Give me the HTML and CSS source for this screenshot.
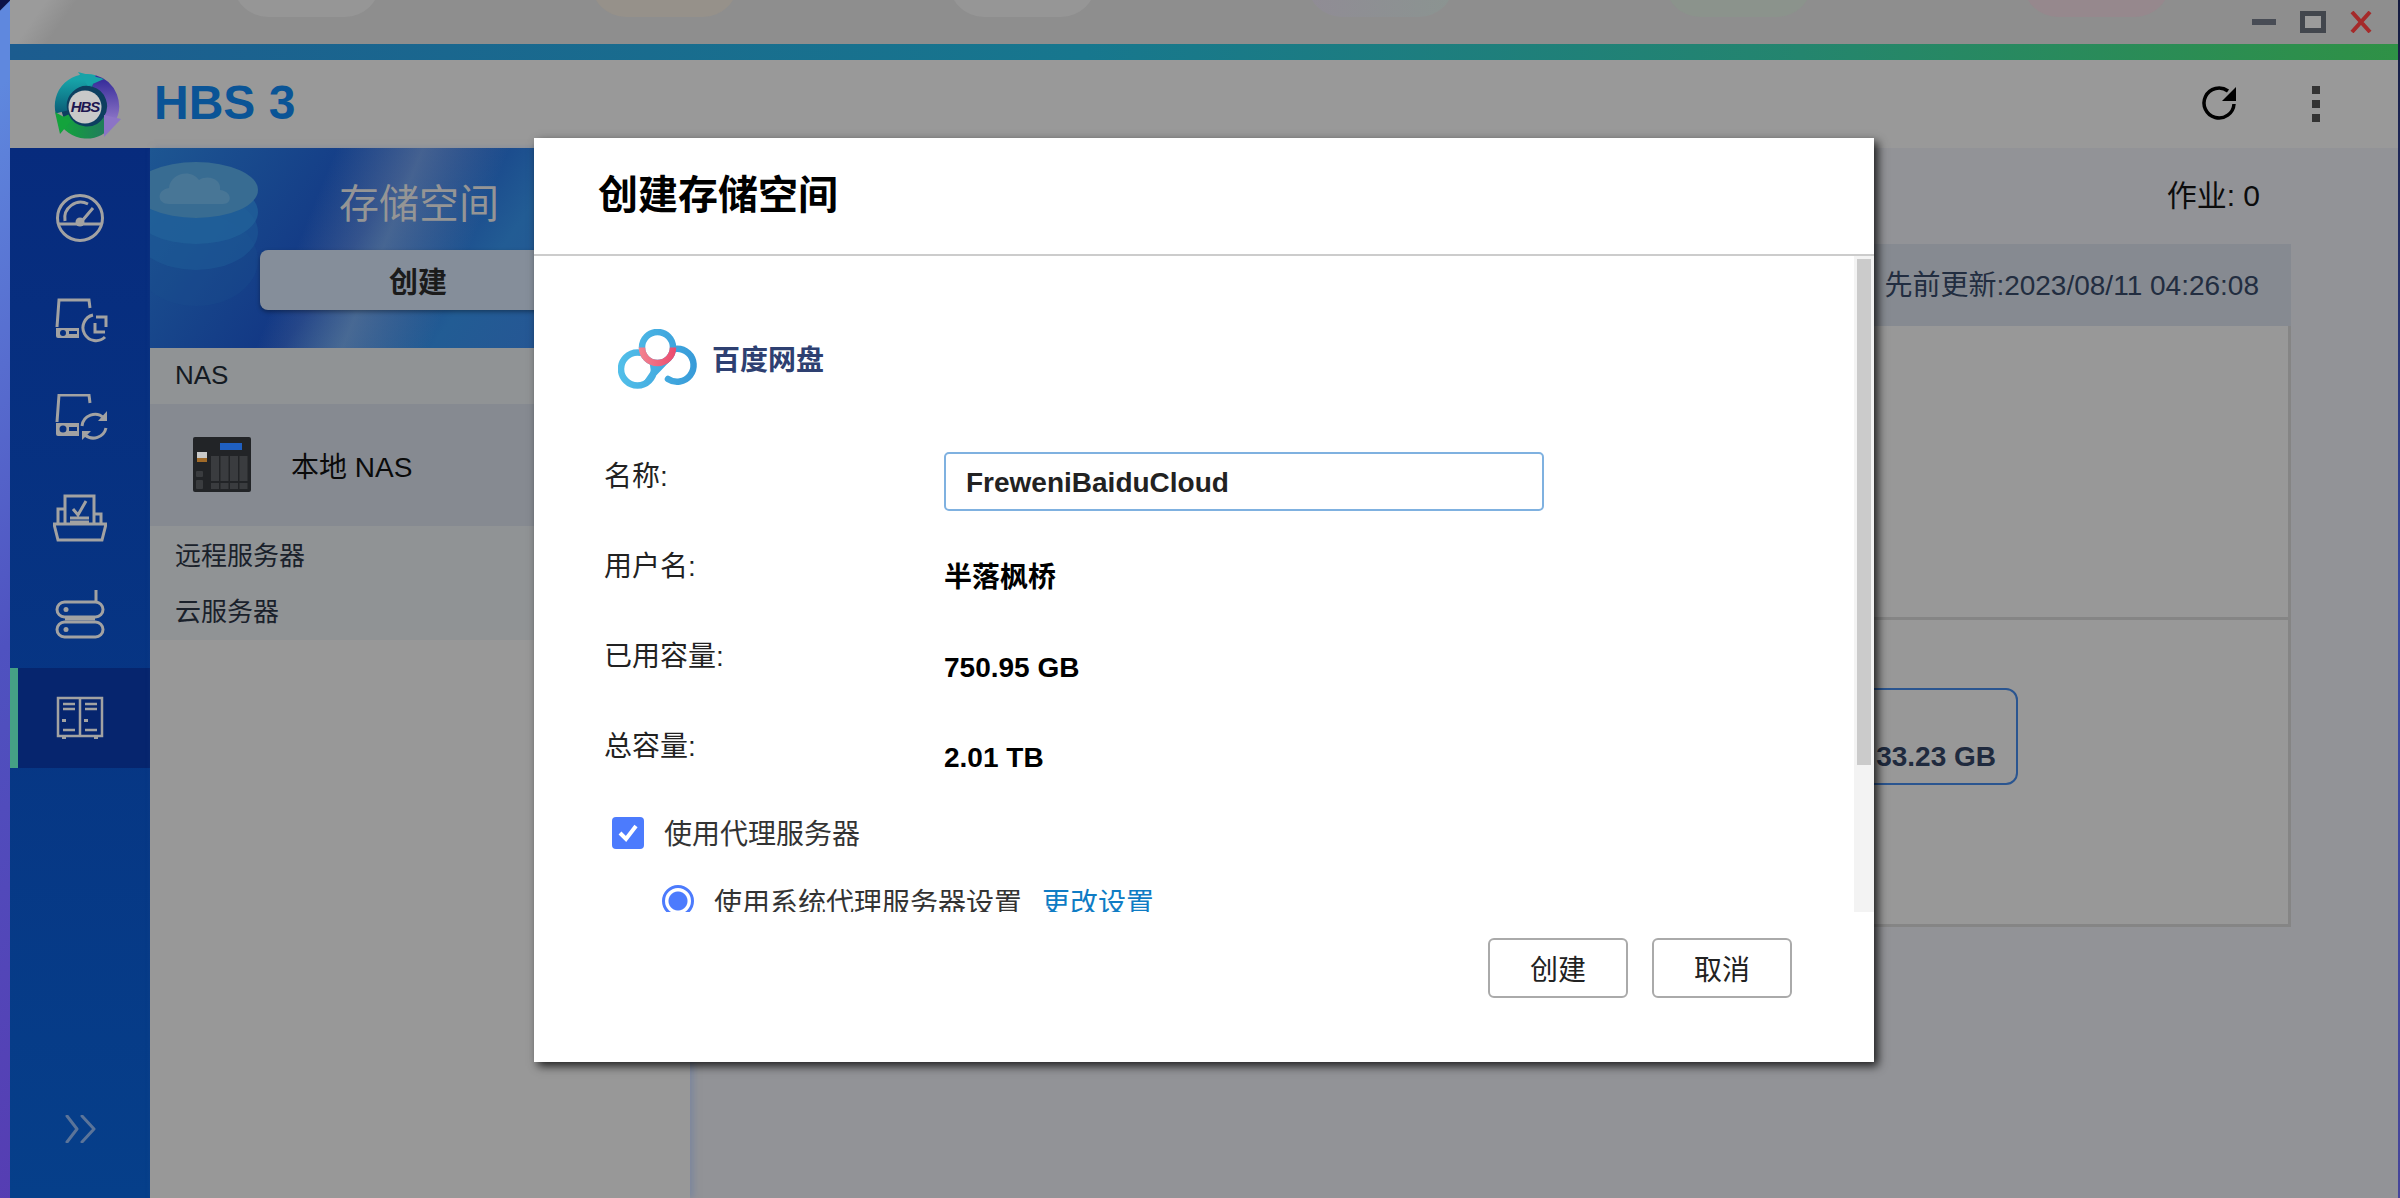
FILE: index.html
```html
<!DOCTYPE html>
<html lang="zh-CN">

<head>
    <meta charset="UTF-8">
    <meta name="viewport" content="width=device-width, initial-scale=1.0">
    <title>HBS 3</title>
    <link rel="stylesheet" href="styles.css">
</head>

<body>
    <div class="wall-left"></div>

    <div class="window">
        <div class="topband">
            <div class="pills">
                <span class="pill pill1"></span>
                <span class="pill pill2"></span>
                <span class="pill pill3"></span>
                <span class="pill pill4"></span>
                <span class="pill pill5"></span>
                <span class="pill pill6"></span>
            </div>
            <div class="winctl">
                <span class="win-min"></span>
                <span class="win-max"></span>
                <svg class="win-close" width="22" height="22" viewBox="0 0 22 22">
                    <path d="M2 1 20 21M20 1 2 21" fill="none" stroke="#a52a2a" stroke-width="4" />
                </svg>
            </div>
        </div>
        <div class="accent"></div>

        <header class="app-header">
            <svg class="app-logo" width="68" height="68" viewBox="0 0 68 68">
                <defs>
                    <linearGradient id="hbsTeal" x1="0" y1="0" x2="0" y2="1">
                        <stop offset="0" stop-color="#17a3a8" />
                        <stop offset="1" stop-color="#0a5f78" />
                    </linearGradient>
                    <linearGradient id="hbsPurple" x1="0" y1="0" x2="0" y2="1">
                        <stop offset="0" stop-color="#3a2f9c" />
                        <stop offset="1" stop-color="#8c74c6" />
                    </linearGradient>
                    <linearGradient id="hbsGreen" x1="1" y1="0" x2="0" y2="0">
                        <stop offset="0" stop-color="#22785f" />
                        <stop offset="1" stop-color="#13a33c" />
                    </linearGradient>
                </defs>
                <circle cx="33" cy="35" r="26" fill="#0d3f60" />
                <path d="M7.5 41A26 26 0 0 1 40 10" fill="none" stroke="url(#hbsTeal)" stroke-width="12" />
                <path d="M40 10A26 26 0 0 1 55 49" fill="none" stroke="url(#hbsPurple)" stroke-width="12" />
                <path d="M55 49A26 26 0 0 1 9 46" fill="none" stroke="url(#hbsGreen)" stroke-width="12" />
                <polygon points="24,1 50,8 34,15" fill="#17a3a8" />
                <polygon points="67,48 50,66 50,44" fill="#8c74c6" />
                <polygon points="6,63 1,41 17,50" fill="#13a33c" />
                <circle cx="31" cy="36" r="16.5" fill="#c9c9c9" />
                <text class="hbs-mark" x="31" y="41">HBS</text>
            </svg>
            <h1 class="app-title">HBS 3</h1>
            <div class="app-tools">
                <svg width="36" height="36" viewBox="0 0 36 36">
                    <path d="M26 5A15 15 0 1 0 32 18" fill="none" stroke="#000" stroke-width="3.5" />
                    <polygon points="34,1 34,15 20,15" fill="#000" />
                </svg>
                <div class="kebab"><i></i><i></i><i></i></div>
            </div>
        </header>

        <div class="app-body">
            <nav class="sidenav">
                <a class="nav-item">
                    <svg width="50" height="50" viewBox="0 0 50 50" class="nav-icon">
                        <circle cx="25" cy="25" r="22.5" />
                        <path d="M3 31H47M10 28A16 16 0 0 1 33 11M27 28 38 15" />
                        <circle cx="25" cy="29" r="4.5" class="solid" />
                    </svg>
                </a>
                <a class="nav-item">
                    <svg width="56" height="50" viewBox="0 0 56 50" class="nav-icon">
                        <path d="M5 34 7 7H37L38 15" />
                        <path d="M4 35H27V45H6Q4 45 4 43Z" class="solid" />
                        <circle cx="11" cy="40" r="3" class="hole" />
                        <rect x="17" y="38" width="8" height="3" class="hole" />
                        <path d="M41 22A13 13 0 1 0 53 44" />
                        <path d="M43 30V39H53M44 24H54V34" />
                    </svg>
                </a>
                <a class="nav-item">
                    <svg width="56" height="48" viewBox="0 0 56 48" class="nav-icon">
                        <path d="M5 28 7 1H37L38 9" />
                        <path d="M4 29H27V42H6Q4 42 4 40Z" class="solid" />
                        <circle cx="11" cy="35" r="3.500" class="hole" />
                        <rect x="17" y="33" width="8" height="4" class="hole" />
                        <path d="M30 32A13 13 0 0 1 52 24M54 34A13 13 0 0 1 33 41" />
                        <path d="M55 17V27H46ZM30 46V37H39Z" class="solid" />
                    </svg>
                </a>
                <a class="nav-item">
                    <svg width="54" height="48" viewBox="0 0 54 48" class="nav-icon">
                        <path d="M12 29V2H41V29" />
                        <path d="M12 15H5V29M41 20H48V29" />
                        <path d="M1 30H53L49 46H5Z" />
                        <path d="M20 15 25 21 33 7M17 24H36M17 28H36" />
                    </svg>
                </a>
                <a class="nav-item">
                    <svg width="50" height="58" viewBox="0 0 50 58" class="nav-icon">
                        <rect x="2" y="13" width="46" height="15" rx="7.5" />
                        <rect x="2" y="33" width="46" height="15" rx="7.5" />
                        <path d="M41 1V13M10 30H40" />
                        <circle cx="11" cy="20.5" r="2.5" class="solid" />
                        <circle cx="11" cy="40.5" r="2.5" class="solid" />
                    </svg>
                </a>
                <a class="nav-item active">
                    <svg width="48" height="44" viewBox="0 0 48 44" class="nav-icon thin">
                        <rect x="2" y="2" width="44" height="38" />
                        <path d="M24 2V40M7 8H19M7 13H19M29 8H41M29 13H41M7 34H19M29 34H41" />
                        <path d="M6 23H10V26H6ZM28 23H32V26H28ZM6 40H10V43H6ZM38 40H42V43H38Z" class="solid" />
                    </svg>
                </a>
                <a class="nav-expand">
                    <svg width="32" height="28" viewBox="0 0 32 28">
                        <path d="M3 1 13 14 3 27M18 1 30 14 18 27" fill="none" stroke="#5b7499" stroke-width="3" stroke-linecap="round" stroke-linejoin="round" />
                    </svg>
                </a>
            </nav>

            <aside class="panel">
                <div class="hero">
                    <svg class="hero-art" width="130" height="170" viewBox="0 0 130 170">
                        <ellipse cx="62" cy="100" rx="62" ry="46" fill="#1a4f8e" opacity="0.3" />
                        <ellipse cx="62" cy="72" rx="62" ry="38" fill="#1f6098" opacity="0.45" />
                        <ellipse cx="62" cy="52" rx="62" ry="32" fill="#22629a" opacity="0.75" />
                        <ellipse cx="62" cy="30" rx="62" ry="28" fill="#386c92" />
                        <path d="M35 44C23 44 22 30 35 28 36 14 56 8 65 20 75 14 88 20 86 30 98 31 99 44 89 44Z" fill="#487696" />
                    </svg>
                    <h2 class="hero-title">存储空间</h2>
                    <button class="hero-btn">创建</button>
                </div>
                <div class="group-title">NAS</div>
                <div class="nas-row">
                    <svg width="58" height="56" viewBox="0 0 58 56">
                        <rect width="58" height="55" rx="2" fill="#222427" />
                        <rect x="27" y="6" width="22" height="7" fill="#1f5fc0" />
                        <rect x="4" y="15" width="10" height="6" fill="#c9c9c9" />
                        <rect x="4" y="21" width="10" height="4" fill="#a06a28" />
                        <rect x="3" y="34" width="7" height="6" rx="1" fill="#3a3c3f" />
                        <rect x="3" y="43" width="7" height="9" rx="1" fill="#3a3c3f" />
                        <rect x="18" y="19" width="8" height="25" fill="#3a3c3f" />
                        <rect x="27.500" y="19" width="8" height="25" fill="#3a3c3f" />
                        <rect x="37" y="19" width="8" height="25" fill="#3a3c3f" />
                        <rect x="46.500" y="19" width="8" height="25" fill="#3a3c3f" />
                        <rect x="18" y="46" width="8" height="6" fill="#3a3c3f" />
                        <rect x="27.500" y="46" width="8" height="6" fill="#3a3c3f" />
                        <rect x="37" y="46" width="8" height="6" fill="#3a3c3f" />
                        <rect x="46.500" y="46" width="8" height="6" fill="#3a3c3f" />
                    </svg>
                    <span class="nas-name">本地 NAS</span>
                </div>
                <div class="server-group">
                    <div class="server-row">远程服务器</div>
                    <div class="server-row">云服务器</div>
                </div>
            </aside>

            <main class="main">
                <div class="job-bar">作业: 0</div>
                <section class="box">
                    <div class="box-head">先前更新:2023/08/11 04:26:08</div>
                    <div class="box-top"></div>
                    <div class="box-bottom">
                        <div class="capsule">33.23 GB</div>
                    </div>
                </section>
            </main>
        </div>
    </div>

    <div class="wall-right"></div>

    <div class="dialog">
        <div class="dialog-head">创建存储空间</div>
        <div class="dialog-body">
            <div class="dialog-form">
                <div class="cloud-logo">
                    <svg width="80" height="60" viewBox="0 0 80 60">
                        <defs>
                            <linearGradient id="baiduBlue" gradientUnits="userSpaceOnUse" x1="0" y1="0" x2="80" y2="0">
                                <stop offset="0" stop-color="#52bfe9" />
                                <stop offset="1" stop-color="#379ad8" />
                            </linearGradient>
                            <linearGradient id="baiduPink" gradientUnits="userSpaceOnUse" x1="21" y1="0" x2="58" y2="0">
                                <stop offset="0" stop-color="#f28490" />
                                <stop offset="1" stop-color="#ec4a6e" />
                            </linearGradient>
                        </defs>
                        <circle cx="19.500" cy="40" r="16.500" fill="none" stroke="url(#baiduBlue)" stroke-width="6.500" />
                        <path d="M48 24A16.500 16.500 0 1 1 50 50" fill="none" stroke="url(#baiduBlue)" stroke-width="6.500" stroke-linecap="round" />
                        <polygon points="31,28 54,30 30,55 22,58 33,42" fill="url(#baiduBlue)" />
                        <circle cx="39.500" cy="18.500" r="15.500" fill="#fff" stroke="url(#baiduBlue)" stroke-width="6.500" />
                        <path d="M24 18.500A15.500 15.500 0 0 0 55 18.500" fill="none" stroke="url(#baiduPink)" stroke-width="6.500" />
                    </svg>
                    <span class="cloud-name">百度网盘</span>
                </div>
                <div class="form-grid">
                    <div class="form-label">名称:</div>
                    <div><input class="text-input" value="FreweniBaiduCloud"></div>
                    <div class="form-label">用户名:</div>
                    <div class="form-value">半落枫桥</div>
                    <div class="form-label">已用容量:</div>
                    <div class="form-value">750.95 GB</div>
                    <div class="form-label">总容量:</div>
                    <div class="form-value">2.01 TB</div>
                </div>
                <div class="check-row">
                    <span class="check-box">
                        <svg width="22" height="20" viewBox="0 0 22 20">
                            <path d="M3 10 9 16 19 3" fill="none" stroke="#fff" stroke-width="4" />
                        </svg>
                    </span>
                    <span class="check-text">使用代理服务器</span>
                </div>
                <div class="radio-row">
                    <span class="radio"></span>
                    <span>使用系统代理服务器设置</span>
                    <a class="link">更改设置</a>
                </div>
            </div>
            <div class="scrollbar"><div class="scroll-thumb"></div></div>
        </div>
        <div class="dialog-foot">
            <button class="btn">创建</button>
            <button class="btn">取消</button>
        </div>
    </div>
</body>

</html>
```

FILE: styles.css
```css
html, body {
    margin: 0;
    height: 100%;
}

body {
    display: flex;
    height: 1198px;
    overflow: hidden;
    font-family: "Liberation Sans", "Noto Sans CJK SC", sans-serif;
    font-size: 28px;
    color: #222;
    background: #929397;
}

.wall-left {
    width: 10px;
    background: linear-gradient(135deg, #0c1248 0, #0c1248 7px, #5f88de 8px, #5f88de 60px, #4f52c0 460px, #5a30aa 1100px);
}

.wall-right {
    width: 2px;
    background: linear-gradient(180deg, #141a3e, #3a4aa0 600px, #46459a);
}

.window {
    flex: 1;
    display: flex;
    flex-direction: column;
    min-width: 0;
}

/* top strip with the dimmed desktop behind */
.topband {
    height: 44px;
    overflow: hidden;
    display: flex;
    justify-content: space-between;
    background: linear-gradient(125deg, #9b9b9b 0, #9b9b9b 30px, #8e8e8e 55px);
}

.pills {
    display: flex;
    gap: 211px;
    padding-left: 223px;
}

.pill {
    width: 147px;
    height: 70px;
    margin-top: -53px;
    border-radius: 44px;
}

.pill1 { background: #969696; }
.pill2 { background: #96918a; }
.pill3 { background: #969696; }
.pill4 { background: linear-gradient(90deg, #908c95, #8b9491); }
.pill5 { background: #8b938c; }
.pill6 { background: #96888d; }

.winctl {
    display: flex;
    align-items: center;
    gap: 24px;
    padding-right: 26px;
}

.win-min {
    width: 24px;
    height: 6px;
    background: #484c55;
}

.win-max {
    width: 26px;
    height: 22px;
    box-sizing: border-box;
    border: 5px solid #42464d;
    background: #9b9b9b;
}

.accent {
    height: 16px;
    background: linear-gradient(90deg, #1c5c8f, #17778e 45%, #24856e 75%, #2f9146);
}

.app-header {
    height: 88px;
    display: flex;
    align-items: center;
    padding: 0 78px 0 44px;
    background: #999;
}

.app-logo {
    margin-right: 32px;
    margin-top: 2px;
}

.hbs-mark {
    font-size: 15px;
    font-weight: bold;
    font-style: italic;
    letter-spacing: -1px;
    text-anchor: middle;
    fill: #1d1650;
}

.app-title {
    margin: 0 0 4px;
    font-size: 48px;
    font-weight: bold;
    color: #0a5496;
}

.app-tools {
    margin-left: auto;
    display: flex;
    align-items: center;
    gap: 74px;
}

.kebab {
    display: flex;
    flex-direction: column;
    gap: 6px;
}

.kebab i {
    display: block;
    width: 8px;
    height: 8px;
    background: #333;
}

.app-body {
    flex: 1;
    display: flex;
    min-height: 0;
}

.sidenav {
    width: 140px;
    padding-top: 20px;
    box-sizing: border-box;
    display: flex;
    flex-direction: column;
    background: linear-gradient(180deg, #072b7d, #063f8a);
}

.nav-item {
    height: 100px;
    display: flex;
    align-items: center;
    justify-content: center;
    flex: none;
}

.nav-item.active {
    background: #06256e;
    border-left: 8px solid #45a085;
    padding-right: 8px;
    box-sizing: border-box;
}

.nav-icon {
    fill: none;
    stroke: #a2a2a2;
    stroke-width: 3;
}

.nav-icon.thin {
    stroke-width: 2.5;
}

.nav-icon .solid {
    fill: #a2a2a2;
    stroke: none;
}

.nav-icon .hole {
    fill: #07307f;
    stroke: none;
}

.nav-expand {
    margin-top: auto;
    margin-bottom: 55px;
    display: flex;
    justify-content: center;
}

.panel {
    width: 540px;
    flex: none;
    background: #989898;
    box-shadow: 4px 0 6px rgba(110, 125, 160, 0.55);
    position: relative;
}

.hero {
    height: 200px;
    box-sizing: border-box;
    padding-top: 32px;
    position: relative;
    overflow: hidden;
    display: flex;
    flex-direction: column;
    align-items: center;
    background:
        linear-gradient(112deg, transparent 30%, rgba(130, 150, 160, 0.45) 44%, transparent 58%),
        linear-gradient(125deg, #1d5692 0, #123684 40%, #225c94 62%, #2a4f95 100%);
}

.hero-art {
    position: absolute;
    left: -16px;
    top: 12px;
}

.hero-title {
    margin: 0 0 22px;
    position: relative;
    left: -1px;
    font-size: 40px;
    line-height: 48px;
    font-weight: normal;
    color: #959595;
}

.hero-btn {
    position: relative;
    width: 320px;
    height: 60px;
    padding: 0 4px 0 0;
    border: 0;
    border-radius: 8px;
    background: #858e9a;
    box-shadow: 0 2px 4px rgba(0, 0, 0, 0.35);
    font: bold 29px "Liberation Sans", "Noto Sans CJK SC", sans-serif;
    color: #1b1b1b;
}

.group-title {
    height: 56px;
    line-height: 54px;
    padding-left: 25px;
    font-size: 26px;
    color: #141a22;
    background: #909395;
}

.nas-row {
    height: 122px;
    display: flex;
    align-items: center;
    gap: 40px;
    padding-left: 43px;
    background: #868a91;
}

.nas-name {
    color: #0a0a0a;
}

.server-group {
    padding-top: 2px;
    background: #909395;
}

.server-row {
    height: 56px;
    line-height: 56px;
    padding-left: 25px;
    font-size: 26px;
    color: #1a212b;
}

.main {
    flex: 1;
    min-width: 0;
    padding-right: 107px;
    background: #929397;
}

.job-bar {
    height: 96px;
    line-height: 96px;
    text-align: right;
    padding-right: 31px;
    font-size: 30px;
    color: #0c0c0c;
}

.box {
    height: 683px;
    margin-left: 30px;
    box-sizing: border-box;
    border: 3px solid #858585;
    border-top: 0;
    display: flex;
    flex-direction: column;
    background: #989898;
}

.box-head {
    height: 82px;
    line-height: 84px;
    margin: 0 -3px;
    padding-right: 32px;
    text-align: right;
    color: #222d40;
    background: #868a91;
}

.box-top {
    height: 291px;
    border-bottom: 3px solid #858585;
}

.box-bottom {
    flex: 1;
    padding: 68px 270px 0 0;
    display: flex;
    justify-content: flex-end;
    align-items: flex-start;
}

.capsule {
    width: 320px;
    height: 97px;
    box-sizing: border-box;
    border: 2px solid #2a5590;
    border-radius: 12px;
    padding: 47px 20px 0 0;
    text-align: right;
    line-height: 40px;
    font-weight: bold;
    color: #1f2a3e;
}

/* modal */
.dialog {
    position: absolute;
    left: 534px;
    top: 138px;
    width: 1340px;
    height: 924px;
    display: flex;
    flex-direction: column;
    background: #fff;
    box-shadow: 4px 4px 9px rgba(0, 0, 0, 0.8);
}

.dialog-head {
    height: 116px;
    line-height: 114px;
    padding-left: 64px;
    font-size: 40px;
    font-weight: bold;
    color: #000;
    border-bottom: 2px solid #ccc;
}

.dialog-body {
    height: 656px;
    display: flex;
    overflow: hidden;
}

.dialog-form {
    flex: 1;
    padding: 73px 0 0 70px;
}

.cloud-logo {
    display: flex;
    align-items: center;
    gap: 14px;
    margin: 0 0 68px 14px;
    height: 60px;
}

.cloud-name {
    font-weight: bold;
    color: #2e4071;
    position: relative;
    top: -1px;
}

.form-grid {
    display: grid;
    grid-template-columns: 340px 1fr;
    grid-auto-rows: 90px;
}

.form-label {
    line-height: 40px;
    color: #222;
}

.form-value {
    line-height: 40px;
    padding-top: 11px;
    font-weight: bold;
    color: #000;
}

.text-input {
    width: 600px;
    height: 59px;
    margin-top: -5px;
    box-sizing: border-box;
    border: 2px solid #7fb1e0;
    border-radius: 5px;
    padding: 2px 19px 0 20px;
    outline: none;
    font: bold 28px "Liberation Sans", "Noto Sans CJK SC", sans-serif;
    color: #222;
}

.check-row {
    display: flex;
    align-items: center;
    gap: 20px;
    height: 32px;
    margin: 0 0 36px 8px;
    color: #333;
}

.check-text {
    position: relative;
    top: -1px;
}

.check-box {
    width: 32px;
    height: 32px;
    border-radius: 4px;
    background: #4c7bfd;
    display: flex;
    align-items: center;
    justify-content: center;
}

.radio-row {
    display: flex;
    align-items: center;
    gap: 20px;
    height: 32px;
    margin-left: 58px;
    color: #333;
}

.radio {
    width: 32px;
    height: 32px;
    box-sizing: border-box;
    border: 3px solid #4c7bfd;
    border-radius: 50%;
    background: radial-gradient(circle, #4c7bfd 0, #4c7bfd 9px, #fff 10px);
}

.link {
    color: #0f7cc4;
}

.scrollbar {
    width: 20px;
    flex: none;
    padding: 3px;
    box-sizing: border-box;
    background: #f3f3f3;
}

.scroll-thumb {
    height: 506px;
    background: #cbcbcb;
}

.dialog-foot {
    flex: 1;
    display: flex;
    justify-content: flex-end;
    align-items: flex-start;
    gap: 24px;
    padding: 26px 82px 0 0;
}

.btn {
    width: 140px;
    height: 60px;
    border: 2px solid #aaa;
    border-radius: 6px;
    background: #fff;
    font: 28px "Liberation Sans", "Noto Sans CJK SC", sans-serif;
    color: #222;
}
```
